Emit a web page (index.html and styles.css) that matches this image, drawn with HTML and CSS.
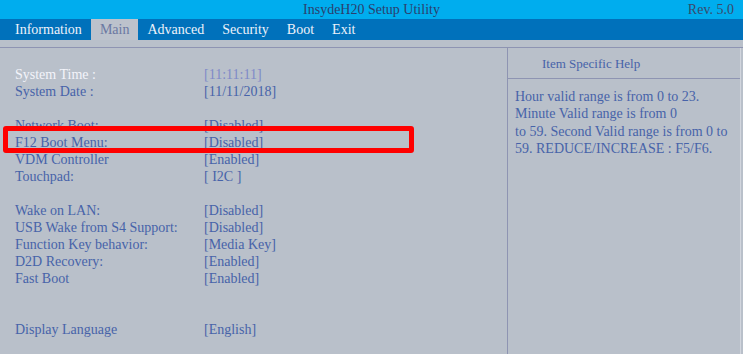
FILE: index.html
```html
<!DOCTYPE html>
<html lang="en">
  <head>
    <meta charset="UTF-8" />
    <meta name="viewport" content="width=device-width, initial-scale=1.0" />
    <title>InsydeH20 Setup Utility</title>
    <link rel="stylesheet" href="styles.css">
  </head>
  <body>
    <div class="titlebar">
      <span></span>
      <span class="title">InsydeH20 Setup Utility</span>
      <span class="rev">Rev. 5.0</span>
    </div>
    <div class="menubar">
      <span class="menuItem">Information</span>
      <span class="menuItem active">Main</span>
      <span class="menuItem">Advanced</span>
      <span class="menuItem">Security</span>
      <span class="menuItem">Boot</span>
      <span class="menuItem">Exit</span>
    </div>

    <div class="main">
      <div class="settings">
        <div class="row selected"><span>System Time :</span><span class="value">[11:11:11]</span></div>
        <div class="row"><span>System Date :</span><span>[11/11/2018]</span></div>
        <div class="row"></div>
        <div class="row"><span>Network Boot:</span><span>[Disabled]</span></div>
        <div class="row"><span>F12 Boot Menu:</span><span>[Disabled]</span></div>
        <div class="row"><span>VDM Controller</span><span>[Enabled]</span></div>
        <div class="row"><span>Touchpad:</span><span>[ I2C ]</span></div>
        <div class="row"></div>
        <div class="row"><span>Wake on LAN:</span><span>[Disabled]</span></div>
        <div class="row"><span>USB Wake from S4 Support:</span><span>[Disabled]</span></div>
        <div class="row"><span>Function Key behavior:</span><span>[Media Key]</span></div>
        <div class="row"><span>D2D Recovery:</span><span>[Enabled]</span></div>
        <div class="row"><span>Fast Boot</span><span>[Enabled]</span></div>
        <div class="row"></div>
        <div class="row"></div>
        <div class="row"><span>Display Language</span><span>[English]</span></div>

        <div class="marker"></div>
      </div>

      <div class="help">
        <div class="helpHead">Item Specific Help</div>
        <div class="helpBody">
          Hour valid range is from 0 to 23.<br />
          Minute Valid range is from 0<br />
          to 59. Second Valid range is from 0 to<br />
          59. REDUCE/INCREASE : F5/F6.
        </div>
      </div>
    </div>
  </body>
</html>
```

FILE: styles.css
```css
body {
  margin: 0;
  background-color: #b9c0ca;
  font-family: "Liberation Serif", "Times New Roman", serif;
  font-size: 14px;
  color: #4763a9;
  overflow: hidden;
}

.titlebar {
  height: 19px;
  background-color: #00adee;
  display: grid;
  grid-template-columns: 1fr auto 1fr;
  align-items: center;
  line-height: 19px;
  color: #2b3f6d;
}
.rev {
  justify-self: end;
  padding-right: 9px;
  color: #3a4a6c;
}

.menubar {
  height: 21px;
  background-color: #0071bb;
  display: flex;
  padding-left: 6px;
}
.menuItem {
  padding: 0 9px;
  line-height: 22px;
  color: #eef2fa;
}
.menuItem.active {
  background-color: #bcc2cc;
  color: #6b78a2;
}

.main {
  margin-top: 7px;
  border-top: 1px solid #8e94b2;
  display: flex;
  height: 306px;
}

.settings {
  position: relative;
  box-sizing: border-box;
  width: 508px;
  border-right: 1px solid #8e94b2;
  padding: 18px 0 0 15px;
}
.row {
  display: grid;
  grid-template-columns: 189px auto;
  height: 17px;
  line-height: 17px;
  white-space: nowrap;
}
.row.selected span:first-child {
  color: #f3f4fa;
}
.row.selected .value {
  color: #7f8ac8;
}

/* red annotation box over the F12 row */
.marker {
  position: absolute;
  left: 3px;
  top: 78px;
  width: 411px;
  height: 27px;
  box-sizing: border-box;
  border: 5px solid #ff0000;
  border-radius: 3px;
}

.help {
  box-sizing: border-box;
  width: 233px;
  border-right: 1px solid #d2d6de;
}
.helpHead {
  height: 30px;
  line-height: 31px;
  border-bottom: 1px solid #8e94b2;
  padding-left: 34px;
  font-size: 13px;
}
.helpBody {
  padding: 9px 0 0 7px;
  line-height: 17.4px;
  white-space: nowrap;
}
```
